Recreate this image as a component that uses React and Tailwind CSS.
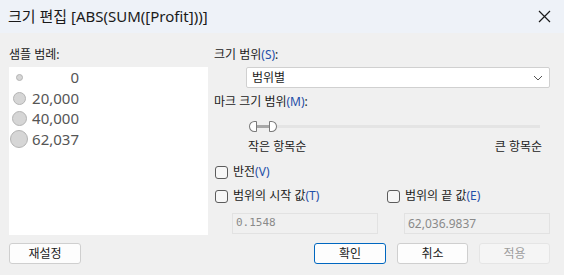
const FONT = { fontFamily: '"Segoe UI", "Noto Sans", "Noto Sans CJK KR", sans-serif' }

const LEGEND = [
  { value: '0', size: 'w-[7px] h-[7px]' },
  { value: '20,000', size: 'w-[13px] h-[13px]' },
  { value: '40,000', size: 'w-[15px] h-[15px]' },
  { value: '62,037', size: 'w-[18px] h-[18px]' },
]

export default function App() {
  return (
    <div className="w-[564px] h-[275px] bg-[#f0f0f0] text-[#1b1b1b] overflow-hidden flex flex-col" style={FONT}>
      <TitleBar />
      <div className="flex flex-1 pl-[9px] pt-[14px]">
        <div className="w-[200px] flex flex-col">
          <div className="text-[12px] leading-[16px] h-[20px]">샘플 범례:</div>
          <div className="bg-white h-[168px] pt-[0px]">
            {LEGEND.map(item => (
              <div key={item.value} className="flex items-center h-[20.7px]">
                <div className="w-[20px] flex justify-center">
                  <span className={`${item.size} rounded-full bg-[#d6d6d6] border border-[#b4b4b4]`} />
                </div>
                <div className="w-[50px] text-right text-[15px] text-[#555] leading-none">{item.value}</div>
              </div>
            ))}
          </div>
          <div className="pt-[8px]">
            <Button className="w-[72px]">재설정</Button>
          </div>
        </div>
        <RightPanel />
      </div>
    </div>
  )
}

function TitleBar() {
  return (
    <div className="h-[33px] bg-[#eef2f8] flex items-center justify-between pl-[8px] pr-[13px]">
      <span className="text-[15px] text-[#1a1a1a]">크기 편집 [ABS(SUM([Profit]))]</span>
      <svg width="13" height="13" viewBox="0 0 13 13">
        <path d="M1 1 L12 12 M12 1 L1 12" stroke="#1a1a1a" strokeWidth="1.2" />
      </svg>
    </div>
  )
}

function Key({ k }) {
  return <span className="text-[#1f4fa8]">({k})</span>
}

function RightPanel() {
  return (
    <div className="flex-1 pl-[6px] pr-[14px] flex flex-col text-[12px]">
      <div className="leading-[16px] h-[20px]">크기 범위<Key k="S" />:</div>
      <div className="ml-[32px] h-[21px] bg-white border border-[#d0d0d0] rounded-[2px] flex items-center justify-between pl-[5px] pr-[6px]">
        <span>범위별</span>
        <svg width="10" height="6" viewBox="0 0 10 6">
          <path d="M1 1 L5 5 L9 1" fill="none" stroke="#555" strokeWidth="1" />
        </svg>
      </div>
      <div className="mt-[6px] leading-[16px] h-[16px]">마크 크기 범위<Key k="M" />:</div>
      <Slider />
      <div className="ml-[34px] mr-[8px] mt-[6px] flex justify-between leading-[16px]">
        <span>작은 항목순</span>
        <span>큰 항목순</span>
      </div>
      <div className="mt-[9px]">
        <Check label="반전" k="V" />
      </div>
      <div className="mt-[8px] flex">
        <div className="w-[172px]"><Check label="범위의 시작 값" k="T" /></div>
        <Check label="범위의 끝 값" k="E" />
      </div>
      <div className="mt-[9px] flex pl-[18px] gap-[26px]">
        <Field mono>0.1548</Field>
        <Field>62,036.9837</Field>
      </div>
      <div className="mt-[9px] flex justify-end gap-[11px]">
        <Button primary className="w-[72px]">확인</Button>
        <Button className="w-[71px]">취소</Button>
        <Button disabled className="w-[71px]">적용</Button>
      </div>
    </div>
  )
}

function Slider() {
  return (
    <div className="ml-[35px] mr-[10px] mt-[9px] h-[14px] flex items-center">
      <div className="relative w-full h-[3px] bg-[#e4e4e4]">
        <div className="absolute left-[4px] w-[22px] top-0 h-[3px] bg-[#a8a8a8]" />
        <div className="absolute left-0 top-[-4px] w-[8px] h-[11px] bg-white border border-[#7a7a7a] rounded-l-[6px] rounded-r-[1px]" />
        <div className="absolute left-[20px] top-[-4px] w-[8px] h-[11px] bg-white border border-[#7a7a7a] rounded-r-[6px] rounded-l-[1px]" />
      </div>
    </div>
  )
}

function Check({ label, k }) {
  return (
    <label className="flex items-center gap-[5px] leading-[16px]">
      <span className="ml-[1px] w-[13px] h-[13px] rounded-[3px] border border-[#5c5c5c] bg-[#f7f7f7]" />
      <span>{label}<Key k={k} /></span>
    </label>
  )
}

function Field({ children, mono }) {
  return (
    <div
      className="w-[146px] h-[21px] border border-[#e2e2e2] bg-[#f0f0f0] flex items-center px-[3px] text-[12px] text-[#8a8a8a]"
      style={mono ? { fontFamily: '"DejaVu Sans Mono", monospace', fontSize: '11px' } : undefined}
    >
      {children}
    </div>
  )
}

function Button({ children, primary, disabled, className = '' }) {
  const tone = primary
    ? 'bg-[#fdfdfd] border-[#0067c0] text-[#1b1b1b]'
    : disabled
      ? 'bg-[#f5f5f5] border-[#e5e5e5] text-[#9d9d9d]'
      : 'bg-[#fdfdfd] border-[#cfcfcf] text-[#1b1b1b]'
  return (
    <div className={`${className} h-[21px] rounded-[3px] border ${tone} flex items-center justify-center text-[12px]`}>
      {children}
    </div>
  )
}
